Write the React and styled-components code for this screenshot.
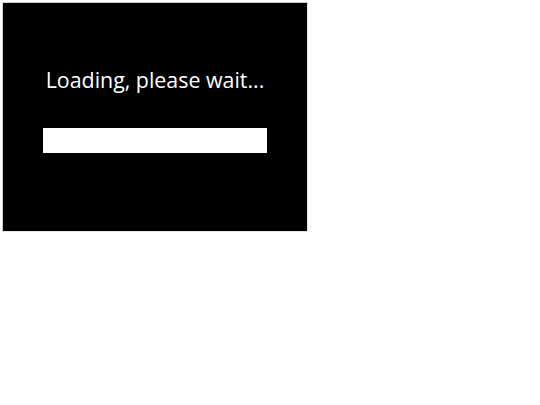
import React from "react";
import styled, { createGlobalStyle } from "styled-components";

const GlobalStyle = createGlobalStyle`
	body {
		margin: 0;
		background: #fff;
		font-family: "Open Sans", "Noto Sans", sans-serif;
	}
`;

const Page = styled.div`
	padding: 2px;
`;

const Frame = styled.div`
	position: relative;
	width: 306px;
	height: 230px;
	box-sizing: border-box;
	border-top: 1px solid #c8c8c8;
	border-left: 1px solid #c8c8c8;
	border-right: 1px solid #e4e4e4;
	border-bottom: 1px solid #e4e4e4;
	background: #000;
	display: flex;
	flex-direction: column;
	align-items: center;
	padding-top: 62px;
`;

const Corner = styled.span`
	position: absolute;
	top: -1px;
	left: -1px;
	width: 3px;
	height: 3px;
	border-top: 1px solid #ddd;
	border-left: 1px solid #ddd;
`;

const Message = styled.div`
	color: #fff;
	font-size: 21.4px;
	line-height: 30px;
`;

const Bar = styled.div`
	margin-top: 33px;
	width: 224px;
	height: 25px;
	background: #fff;
`;

export default function App() {
	return (
		<>
			<GlobalStyle />
			<Page>
				<Frame>
					<Corner />
					<Message>Loading, please wait...</Message>
					<Bar />
				</Frame>
			</Page>
		</>
	);
}
